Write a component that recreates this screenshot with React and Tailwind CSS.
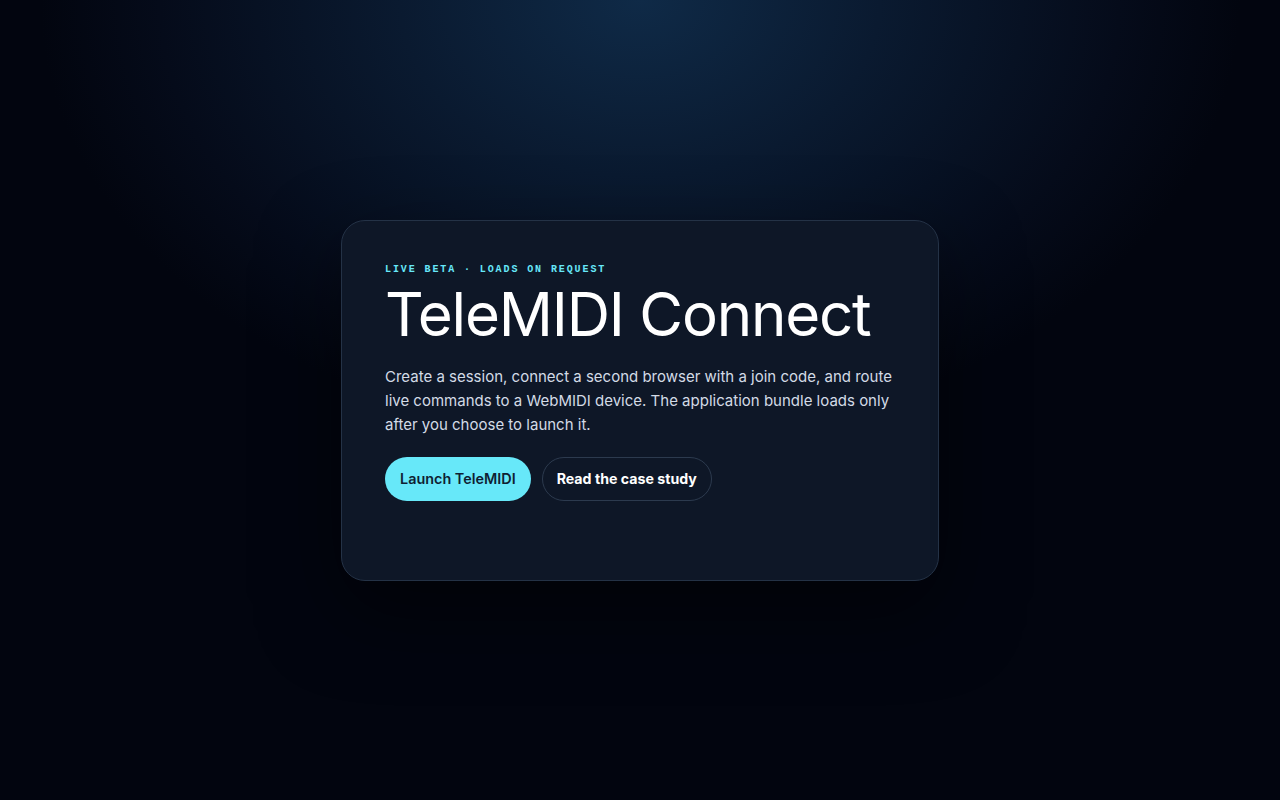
import React from 'react';

const App = () => {
  return (
    <div className="min-h-screen w-full flex items-center justify-center bg-[#02050f] bg-[radial-gradient(ellipse_600px_440px_at_50%_0%,#0f2a47_0%,#0a1a30_40%,#050b1a_80%,#02050f_100%)] font-['Inter',sans-serif]">
      <div className="w-[598px] h-[361px] rounded-[24px] border border-[#243246] bg-[#0e1727] px-[43px] pt-[44px] shadow-[0_30px_80px_rgba(0,0,0,0.5)]">
        <p className="font-['Liberation_Mono',monospace] font-bold text-[10px] tracking-[0.19em] text-[#67e8f9] leading-none">
          LIVE BETA · LOADS ON REQUEST
        </p>
        <h1 className="mt-[9px] text-[60px] leading-[60px] tracking-[-0.02em] text-white font-normal whitespace-nowrap">
          TeleMIDI Connect
        </h1>
        <p className="mt-[21px] text-[15px] leading-[24px] text-[#d3dbe6]">
          Create a session, connect a second browser with a join code, and route live commands to a WebMIDI device. The application bundle loads only after you choose to launch it.
        </p>
        <div className="mt-[20px] flex gap-[11px]">
          <button className="h-[44px] px-[15px] rounded-full bg-[#67e8f9] text-[#0f1f33] text-[14.4px] font-semibold">
            Launch TeleMIDI
          </button>
          <button className="h-[44px] px-[14px] rounded-full border border-[#2c3a4e] text-white text-[14.2px] font-bold">
            Read the case study
          </button>
        </div>
      </div>
    </div>
  );
};

export default App;
